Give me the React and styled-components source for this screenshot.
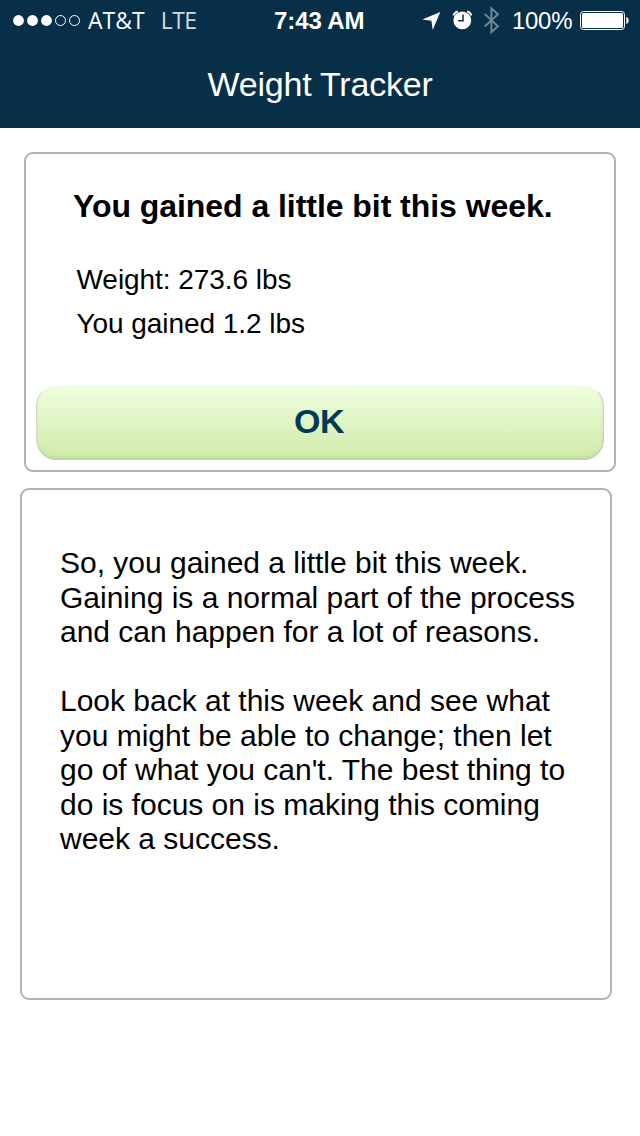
import styled, { createGlobalStyle } from "styled-components";

const GlobalStyle = createGlobalStyle`
  * {
    box-sizing: border-box;
  }

  body {
    margin: 0;
    background: #fff;
    color: #000;
    font-family: "Liberation Sans", Arial, sans-serif;
  }
`;

const Screen = styled.div`
  width: 640px;
  height: 1136px;
  overflow: hidden;
`;

const Header = styled.header`
  height: 128px;
  background: #072f47;
  color: #fff;
`;

const StatusBar = styled.div`
  display: grid;
  grid-template-columns: 274px 148px 1fr;
  height: 40px;
`;

const StatusGroup = styled.div`
  display: flex;
  align-items: center;
  height: 40px;
  padding-left: ${({ $inset }) => $inset || 0}px;

  svg {
    flex: none;
  }
`;

const StatusText = styled.span`
  font-size: 24px;
  line-height: 28px;
  font-weight: ${({ $bold }) => ($bold ? 700 : 400)};
  letter-spacing: ${({ $spacing }) => $spacing || 0}px;
  margin-left: ${({ $gap }) => $gap || 0}px;
  padding-top: 2px;
  white-space: nowrap;
`;

const CarrierText = styled(StatusText)`
  padding-top: 0;
  font-family: "Open Sans", "Noto Sans", sans-serif;
  font-size: 23px;
  font-weight: 400;
  opacity: ${({ $light }) => ($light ? 0.82 : 1)};
`;

const Percent = styled(StatusText)`
  width: 68px;
`;

const Title = styled.h1`
  margin: 0;
  padding-top: 24px;
  font-size: 34px;
  font-weight: 400;
  line-height: 40px;
  letter-spacing: -0.2px;
  text-align: center;
`;

const Card = styled.section`
  border: 2px solid #b2b2b2;
  border-radius: 9px;
  width: 592px;
`;

const ResultCard = styled(Card)`
  display: flex;
  flex-direction: column;
  height: 320px;
  margin: 24px 0 0 24px;
  padding: 33px 10px 10px;
`;

const Heading = styled.h2`
  margin: 0 0 33px 37px;
  font-size: 32px;
  line-height: 38px;
  letter-spacing: -0.05px;
  white-space: nowrap;
`;

const Stat = styled.p`
  margin: 0 0 0 40.5px;
  font-size: 28px;
  line-height: 44px;
  letter-spacing: -0.05px;
`;

const OkButton = styled.button`
  width: 568px;
  height: 74px;
  margin-top: auto;
  padding: 0 2px 4px 0;
  border: 1px solid #c8cdc2;
  border-top-color: #edf8de;
  border-left-color: #d3dcc8;
  border-radius: 20px;
  background: linear-gradient(#f0fdde, #d0ebaa);
  box-shadow: inset 0 -2px 4px -2px rgba(90, 120, 50, 0.35);
  color: #003a57;
  font: bold 34px "Liberation Sans", Arial, sans-serif;
  letter-spacing: -0.5px;
`;

const AdviceCard = styled(Card)`
  height: 512px;
  margin: 16px 0 0 20px;
  padding: 56px 0 0 38px;
`;

const Paragraph = styled.p`
  margin: 0 0 34.5px;
  font-size: 30px;
  line-height: 34.5px;
`;

const Line = styled.span`
  display: block;
  white-space: nowrap;
  letter-spacing: -0.01px;
`;

const SignalDots = () => (
  <svg width="68" height="12" viewBox="0 0 68 12">
    {[0, 1, 2, 3, 4].map((i) => (
      <circle
        key={i}
        cx={5.5 + i * 14}
        cy="6.5"
        r={i < 3 ? 5.4 : 5}
        fill={i < 3 ? "#fff" : "none"}
        stroke="#fff"
        strokeWidth={i < 3 ? 0 : 1}
      />
    ))}
  </svg>
);

const StatusIcons = () => (
  <svg width="84" height="40" viewBox="0 0 84 40">
    <path d="M.3 19.4 18.3 12 10.7 30 9.4 20.7Z" fill="#fff" />
    <circle cx="40.3" cy="20.4" r="8.9" fill="#fff" />
    <path d="M41 14.5v6.3h-4.8" fill="none" stroke="#072f47" strokeWidth="1.5" />
    <path d="M31.5 15.5q.6-3 4.2-4.2M49.4 15.5q-.6-3-4.2-4.2" fill="none" stroke="#fff" strokeWidth="1.8" />
    <path d="m62.7 14 13.2 12.3-6.5 6V8.2l6.5 6-13.2 12.3" fill="none" stroke="#6e8797" strokeWidth="2" />
  </svg>
);

const Battery = () => (
  <svg width="51" height="22" viewBox="0 0 51 22">
    <rect x=".5" y="2.5" width="44" height="18" rx="3" fill="none" stroke="#fff" />
    <rect x="2" y="4" width="41" height="15" rx="1.5" fill="#fff" />
    <path d="M46.3 8c3.2 1 3.2 6 0 7Z" fill="#fff" />
  </svg>
);

const App = () => (
  <>
    <GlobalStyle />
    <Screen>
      <Header>
        <StatusBar>
          <StatusGroup $inset={13}>
            <SignalDots />
            <CarrierText $gap={7}>AT&amp;T</CarrierText>
            <CarrierText $light $gap={16} $spacing={-0.5}>LTE</CarrierText>
          </StatusGroup>
          <StatusGroup>
            <StatusText $bold $spacing={-0.1}>7:43 AM</StatusText>
          </StatusGroup>
          <StatusGroup>
            <StatusIcons />
            <Percent $gap={6} $spacing={-0.3}>100%</Percent>
            <Battery />
          </StatusGroup>
        </StatusBar>
        <Title>Weight Tracker</Title>
      </Header>

      <ResultCard>
        <Heading>You gained a little bit this week.</Heading>
        <Stat>Weight: 273.6 lbs</Stat>
        <Stat>You gained 1.2 lbs</Stat>
        <OkButton>OK</OkButton>
      </ResultCard>

      <AdviceCard>
        <Paragraph>
          <Line>So, you gained a little bit this week.</Line>
          <Line>Gaining is a normal part of the process</Line>
          <Line>and can happen for a lot of reasons.</Line>
        </Paragraph>
        <Paragraph>
          <Line>Look back at this week and see what</Line>
          <Line>you might be able to change; then let</Line>
          <Line>go of what you can't. The best thing to</Line>
          <Line>do is focus on is making this coming</Line>
          <Line>week a success.</Line>
        </Paragraph>
      </AdviceCard>
    </Screen>
  </>
);

export default App;
